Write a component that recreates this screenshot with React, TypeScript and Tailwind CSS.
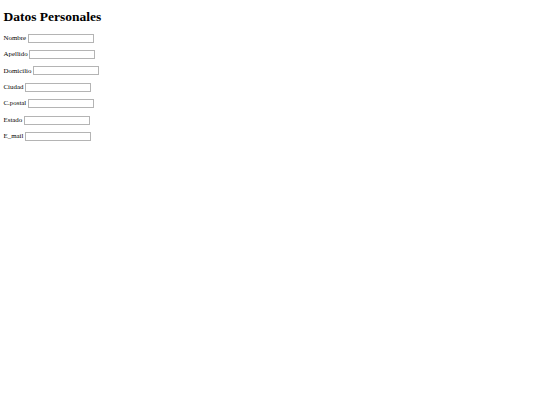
const fields = ['Nombre', 'Apellido', 'Domicilio', 'Ciudad', 'C.postal', 'Estado', 'E_mail'];

export default function App() {
  return (
    <div className="min-h-[405px] bg-white px-[3.5px] font-['Liberation_Serif',serif] text-black">
      <h1 className="pt-[9px] text-[13.5px] font-bold leading-[15.5px]">Datos Personales</h1>
      <form className="mt-[9px] flex flex-col gap-[7px]">
        {fields.map(f => (
          <p key={f} className="flex h-[9.4px] items-center gap-[1.5px] text-[6.9px] leading-none">
            <span>{f}</span>
            <input
              type="text"
              className="h-[9px] w-[66px] border border-[#b4b4b4] bg-white"
            />
          </p>
        ))}
      </form>
    </div>
  );
}
